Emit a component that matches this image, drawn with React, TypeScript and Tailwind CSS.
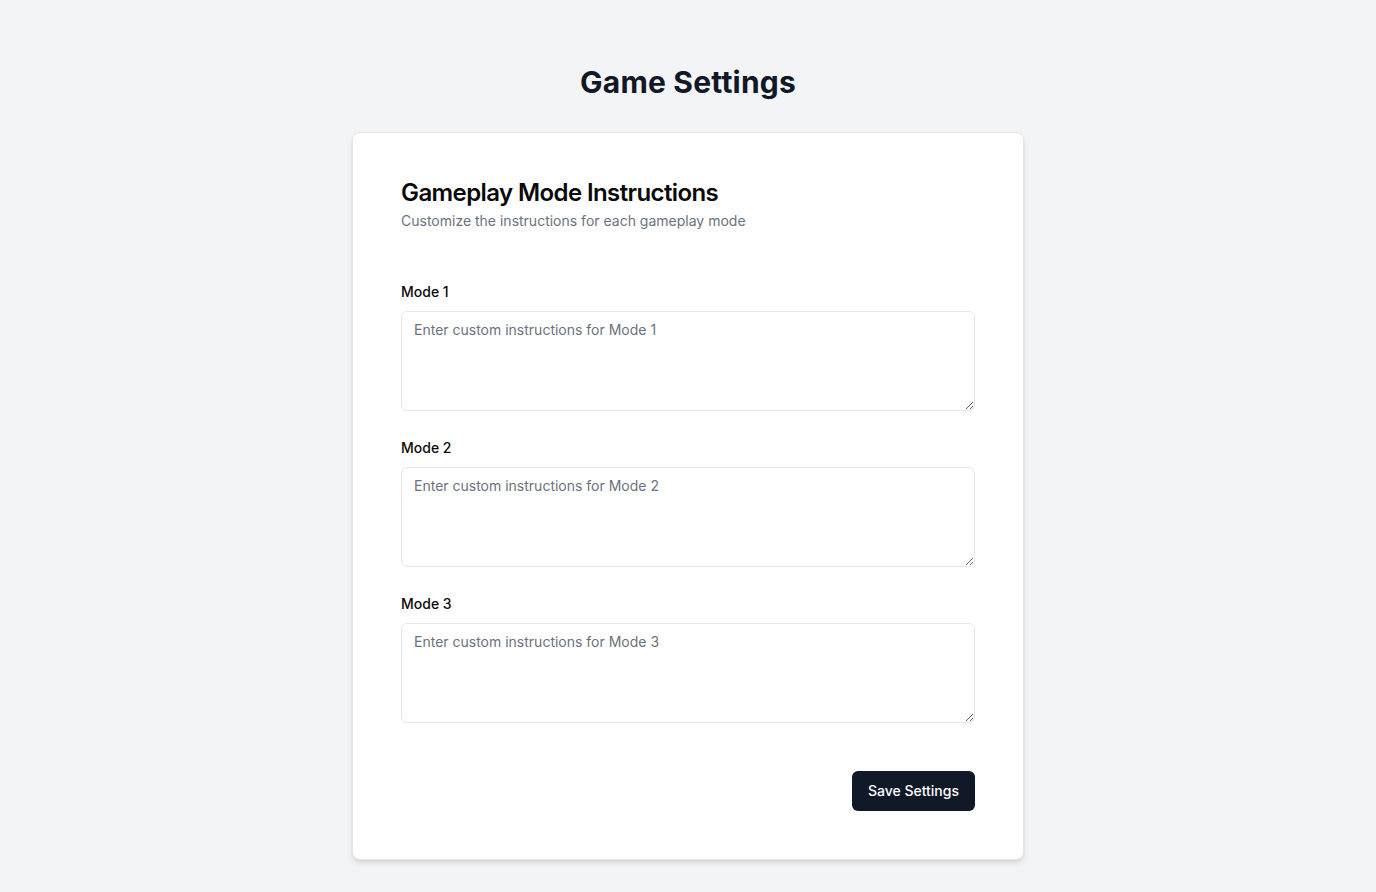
import React from "react";

export default function App() {
  const modes = [1, 2, 3];
  return (
    <div
      className="min-h-screen bg-[#f3f4f6] pt-16 pb-8"
      style={{ fontFamily: "Inter, 'Noto Sans', sans-serif" }}
    >
      <h1 className="text-center text-3xl font-bold tracking-[0.2px] text-[#111827] leading-9">
        Game Settings
      </h1>
      <div className="mx-auto mt-8 w-[672px] rounded-lg border border-[#e5e7eb] bg-white p-12 shadow-md">
        <div className="flex flex-col gap-1.5">
          <h2 className="text-2xl font-semibold leading-none tracking-tight text-[#0a0a0a]">
            Gameplay Mode Instructions
          </h2>
          <p className="text-sm leading-5 text-[#6b7280]">
            Customize the instructions for each gameplay mode
          </p>
        </div>
        <div className="mt-[54px] flex flex-col gap-[30px]">
          {modes.map((m) => (
            <div key={m} className="flex flex-col gap-3">
              <label className="block text-sm font-medium leading-none text-[#0a0a0a]">
                Mode {m}
              </label>
              <textarea
                className="block h-[100px] w-full rounded-md border border-[#e5e7eb] bg-white px-3 py-2 text-sm leading-5 text-[#0a0a0a] placeholder:text-[#6b7280] outline-none"
                placeholder={`Enter custom instructions for Mode ${m}`}
              />
            </div>
          ))}
        </div>
        <div className="mt-12 flex justify-end">
          <button className="h-10 rounded-md bg-[#111827] px-4 text-sm font-medium text-white">
            Save Settings
          </button>
        </div>
      </div>
    </div>
  );
}
